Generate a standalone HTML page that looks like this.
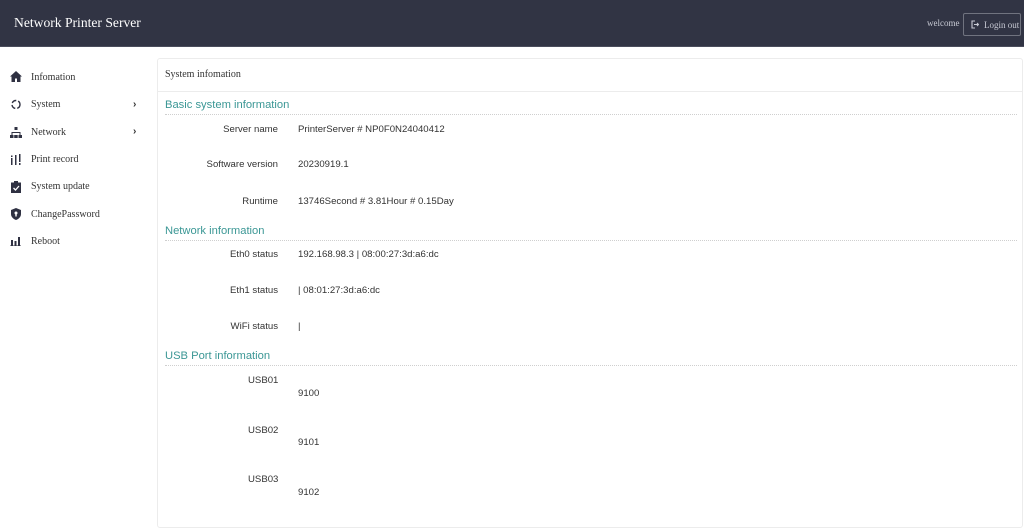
<!DOCTYPE html>
<html><head><meta charset="utf-8"><style>
*{margin:0;padding:0;box-sizing:border-box}
body{width:1024px;height:515px;overflow:hidden;background:#fff;position:relative;font-family:"Liberation Sans",sans-serif;color:#333}
.hdr{position:absolute;left:0;top:0;width:1024px;height:47px;background:#313444;border-bottom:1px solid #4a4d5c}
.ttl{position:absolute;left:14px;top:15px;font:13.6px "Liberation Serif",serif;color:#fff}
.wel{position:absolute;left:927px;top:18px;font:9px "Liberation Serif",serif;color:#c8cad4}
.btn{position:absolute;left:963px;top:13px;width:58px;height:23px;border:1px solid #70737f;border-radius:2px;font:9px "Liberation Serif",serif;color:#c8cad4;padding:6px 0 0 20px}
.btn svg{position:absolute;left:7px;top:6px}
.nav{position:absolute;left:31px;font:10px "Liberation Serif",serif;color:#333}
.ic{position:absolute;left:10px}
.chev{position:absolute;left:133px;font:bold 10px "Liberation Sans",sans-serif;color:#333}
.card{position:absolute;left:157px;top:58px;width:866px;height:470px;border:1px solid #ececec;border-radius:3px;background:#fff}
.ch{position:absolute;left:0;top:0;right:0;height:33px;border-bottom:1px solid #ececec;font:10px "Liberation Serif",serif;color:#333;padding:10px 0 0 7px}
.sec{position:absolute;left:165px;width:852px;font-size:11.2px;color:#3b9795;border-bottom:1px dotted #cfcfcf;height:16px}
.lb{position:absolute;width:120px;left:158px;text-align:right;font-size:9.6px;color:#333}
.v{position:absolute;left:298px;font-size:9.6px;color:#333}
.ul{position:absolute;left:248px;font-size:9.6px;color:#333}
</style></head><body>
<div class="hdr"><div class="ttl">Network Printer Server</div><div class="wel">welcome</div>
<div class="btn"><svg width="8" height="9" viewBox="0 0 8 9"><path d="M4 1H1v7h3M3 4.5h4.5M6 3l1.5 1.5L6 6" fill="none" stroke="#c8cad4" stroke-width="1.1"/></svg>Login out</div></div>

<svg class="ic" style="top:71px" width="12" height="11" viewBox="0 0 12 11"><path d="M6 0L0 5.5h1.5V11h3.5V7.5h2V11h3.5V5.5H12z" fill="#2f3142"/></svg>
<div class="nav" style="top:72px">Infomation</div>
<svg class="ic" style="top:99px" width="12" height="11" viewBox="0 0 12 11"><circle cx="6" cy="5.5" r="4" fill="none" stroke="#2f3142" stroke-width="1.4" stroke-dasharray="5 2"/></svg>
<div class="nav" style="top:99px">System</div><div class="chev" style="top:99px">›</div>
<svg class="ic" style="top:127px" width="12" height="11" viewBox="0 0 12 11"><path d="M4.5 0h3v3h-3zM5.5 3h1v2H1.5v3h1V6h7v2h1V5h-4V3z M0 8h3.5v3H0zM4.2 8h3.5v3H4.2zM8.5 8H12v3H8.5z" fill="#2f3142"/></svg>
<div class="nav" style="top:127px">Network</div><div class="chev" style="top:126px">›</div>
<svg class="ic" style="top:154px" width="12" height="11" viewBox="0 0 12 11"><path d="M1 4h1.5v7H1zM5 1h1.5v10H5zM9 0h1.5v8H9zM9 9h1.5v2H9zM1 1.5h1.5v1.5H1z" fill="#2f3142"/></svg>
<div class="nav" style="top:154px">Print record</div>
<svg class="ic" style="top:181px" width="12" height="12" viewBox="0 0 12 12"><path d="M1 1.5h3V0h4v1.5h3V12H1z" fill="#2f3142"/><path d="M3.5 7l2 2 3.5-4" fill="none" stroke="#fff" stroke-width="1.3"/></svg>
<div class="nav" style="top:181px">System update</div>
<svg class="ic" style="top:208px" width="12" height="12" viewBox="0 0 12 12"><path d="M6 0l5 2v4c0 3-2.5 5-5 6-2.5-1-5-3-5-6V2z" fill="#2f3142"/><circle cx="6" cy="5" r="1.5" fill="#fff"/><rect x="5.3" y="5.5" width="1.4" height="3" fill="#fff"/></svg>
<div class="nav" style="top:209px">ChangePassword</div>
<svg class="ic" style="top:236px" width="12" height="10" viewBox="0 0 12 10"><path d="M1 4h2v6H1zM4.5 5h2v5h-2zM8 1h2v9H8zM0 9.5h11v.5H0z" fill="#2f3142"/></svg>
<div class="nav" style="top:236px">Reboot</div>

<div class="card"><div class="ch">System infomation</div></div>

<div class="sec" style="top:99px">Basic system information</div>
<div class="lb" style="top:124px">Server name</div><div class="v" style="top:124px">PrinterServer # NP0F0N24040412</div>
<div class="lb" style="top:159px">Software version</div><div class="v" style="top:159px">20230919.1</div>
<div class="lb" style="top:196px">Runtime</div><div class="v" style="top:196px">13746Second # 3.81Hour # 0.15Day</div>

<div class="sec" style="top:225px">Network information</div>
<div class="lb" style="top:249px">Eth0 status</div><div class="v" style="top:249px">192.168.98.3 | 08:00:27:3d:a6:dc</div>
<div class="lb" style="top:285px">Eth1 status</div><div class="v" style="top:285px">| 08:01:27:3d:a6:dc</div>
<div class="lb" style="top:321px">WiFi status</div><div class="v" style="top:321px">|</div>

<div class="sec" style="top:350px">USB Port information</div>
<div class="ul" style="top:375px">USB01</div><div class="v" style="top:388px">9100</div>
<div class="ul" style="top:425px">USB02</div><div class="v" style="top:437px">9101</div>
<div class="ul" style="top:474px">USB03</div><div class="v" style="top:487px">9102</div>
</body></html>
